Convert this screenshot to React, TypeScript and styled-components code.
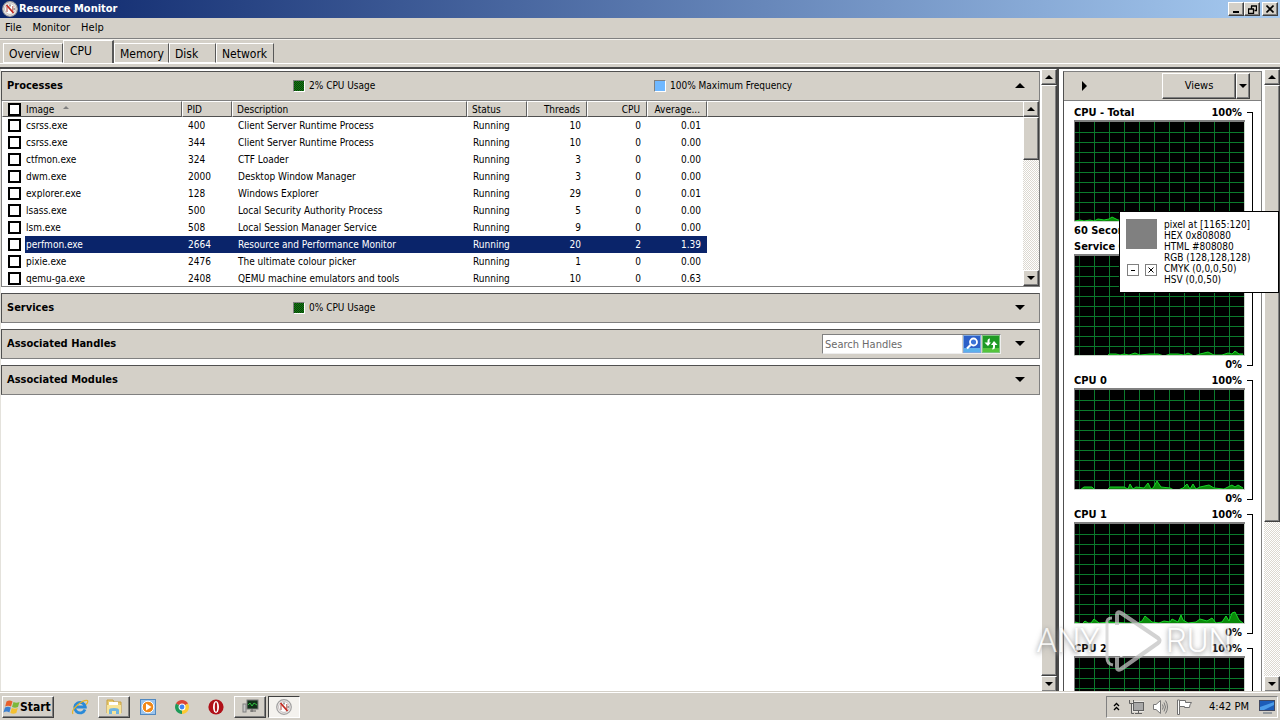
import React from 'react';
import styled, { createGlobalStyle, css } from 'styled-components';

const face = '#d4d0c8';
const dark = '#404040';
const mid = '#808080';

const Global = createGlobalStyle`
  *, *::before, *::after { box-sizing: border-box; }
  body { margin: 0; background: #fff; }
  body, button, input, table {
    font-family: "DejaVu Sans Condensed", "DejaVu Sans", sans-serif;
    font-size: 10px;
    line-height: 14px;
    color: #000;
  }
  button { padding: 0; margin: 0; cursor: default; }
  svg { display: block; flex: none; }
`;

const raised = css`
  background: ${face};
  border: 1px solid;
  border-color: #fff ${dark} ${dark} #fff;
  box-shadow: inset -1px -1px 0 ${mid};
`;

const Page = styled.div`
  display: flex;
  flex-direction: column;
  height: 100vh;
  overflow: hidden;
  position: relative;
  background: ${face};
`;

const TitleBar = styled.header`
  display: flex;
  align-items: center;
  flex: none;
  height: 18px;
  padding: 0 2px;
  gap: 1px;
  background: linear-gradient(90deg, #0a246a, #a6caf0);
`;
const Title = styled.h1`
  flex: 1;
  margin: 0;
  color: #fff;
  font-size: 11px;
  line-height: 18px;
  font-weight: bold;
`;
const WindowButtons = styled.div`
  display: flex;
`;
const WindowButton = styled.button<{ $apart?: boolean }>`
  ${raised}
  width: 16px;
  height: 14px;
  display: grid;
  place-items: center;
  margin-left: ${p => (p.$apart ? 2 : 0)}px;
`;

const MenuBar = styled.nav`
  display: flex;
  flex: none;
  height: 21px;
  padding: 0 5px;
  gap: 11px;
  border-bottom: 1px solid ${mid};
`;
const MenuItem = styled.button`
  border: 0;
  background: none;
  font-size: 11px;
  line-height: 20px;
`;

const TabStrip = styled.div`
  flex: none;
  display: flex;
  align-items: flex-end;
  height: 30px;
  padding: 0 3px 4px;
  border-top: 1px solid #f4f2ee;
  border-bottom: 2px solid #484848;
  background: linear-gradient(#fff, #fff) 0 23px / 100% 1px no-repeat;
`;
const Tab = styled.button<{ $active?: boolean; $w: number }>`
  width: ${p => p.$w}px;
  height: ${p => (p.$active ? '23px' : '20px')};
  padding: ${p => (p.$active ? '0 0 2px 6px' : '1px 0 0 5px')};
  text-align: left;
  font-size: 12px;
  line-height: 16px;
  background: ${face};
  border: solid #fff;
  border-width: ${p => (p.$active ? '1px 0 0 1px' : '1px 0 1px 1px')};
  border-right: ${p => (p.$active ? '2px' : '1px')} solid #585858;
`;

const Body = styled.main`
  flex: 1;
  min-height: 0;
  display: flex;
  background: #fff;
`;
const Sections = styled.div`
  flex: 1;
  min-width: 0;
  display: flex;
  flex-direction: column;
  gap: 6px;
  padding: 2px 1px 0 0;
  border-left: 1px solid #e4e2dc;
`;
const SectionHead = styled.div`
  display: grid;
  grid-template-columns: 286px 361px 1fr auto 38px;
  align-items: center;
  flex: none;
  height: 30px;
  padding-left: 5px;
  background: ${face};
  border: 1px solid ${mid};
  border-top-color: #505050;
  border-left-color: #505050;
`;
const SectionTitle = styled.h2`
  margin: 0;
  font-size: 11px;
  line-height: 16px;
  font-weight: bold;
`;
const Legend = styled.div`
  display: flex;
  align-items: center;
  gap: 4px;
`;
const Swatch = styled.span<{ $blue?: boolean }>`
  width: 12px;
  height: 12px;
  border: 1px solid;
  border-color: ${mid} #fff #fff ${mid};
  background: ${p => (p.$blue ? '#70b8ff' : 'repeating-conic-gradient(#0a3c0a 0 25%, #128012 0 50%) 0 0 / 2px 2px')};
`;
const Toggle = styled.button`
  grid-column: 5;
  border: 0;
  padding-bottom: 2px;
  background: none;
  display: grid;
  place-items: center;
  height: 20px;
`;
const SearchBox = styled.form`
  grid-column: 4;
  display: flex;
  align-items: center;
  gap: 1px;
  border: 1px solid;
  border-color: ${mid} #eee #eee ${mid};
  height: 20px;
`;
const SearchInput = styled.input`
  width: 139px;
  height: 18px;
  border: 0;
  padding: 0 2px;
  background: #fff;
  font-size: 11px;
  outline: 0;
  &::placeholder { color: #6a6a6a; opacity: 1; }
`;
const SearchButton = styled.button`
  border: 0;
  background: none;
  width: 18px;
  height: 18px;
`;

const ListFrame = styled.div`
  display: flex;
  height: 186px;
  overflow: hidden;
  border: 1px solid ${mid};
  border-top: 0;
  background: #fff;
`;
const Table = styled.table`
  flex: 1;
  min-width: 0;
  width: 100%;
  table-layout: fixed;
  border-collapse: separate;
  border-spacing: 0;
  align-self: flex-start;
`;
const Th = styled.th<{ $num?: boolean }>`
  height: 16px;
  padding: 0 6px 0 4px;
  line-height: 13px;
  font-weight: normal;
  text-align: ${p => (p.$num ? 'right' : 'left')};
  white-space: nowrap;
  background: ${face};
  border: 1px solid;
  border-color: #fff #606060 #505050 #fff;
  &:first-child { padding-left: 5px; }
  &:last-child { border-right: 0; }
`;
const Td = styled.td<{ $num?: boolean }>`
  height: 17px;
  padding: 0 6px;
  line-height: 17px;
  text-align: ${p => (p.$num ? 'right' : 'left')};
  white-space: nowrap;
`;
const Row = styled.tr<{ $selected?: boolean }>`
  ${p => p.$selected && css`
    color: #fff;
    td { background: #0a246a; }
    td:first-child { background: linear-gradient(90deg, #fff 23px, #0a246a 23px); }
    td:last-child { background: none; }
  `}
`;
const CheckLine = styled.label`
  display: flex;
  align-items: center;
  gap: 5px;
`;
const Check = styled.input`
  appearance: none;
  margin: 0;
  width: 13px;
  height: 13px;
  flex: none;
  border: 2px solid #000;
  background: #fff;
`;
const SortMark = styled.svg`
  margin: 0 0 3px 4px;
`;

const Scroll = styled.div`
  flex: none;
  width: 16px;
  display: flex;
  flex-direction: column;
  background: repeating-conic-gradient(#fff 0 25%, #dcd8d0 0 50%) 0 0 / 2px 2px;
`;
const ScrollButton = styled.button`
  ${raised}
  flex: none;
  height: 16px;
  display: grid;
  place-items: center;
`;
const Thumb = styled.div<{ $share: string }>`
  ${raised}
  height: ${p => p.$share};
`;
const Track = styled.div`
  flex: 1;
  min-height: 0;
`;
const Splitter = styled.div`
  flex: none;
  width: 6px;
  border-left: 2px solid #484848;
  background: #fff;
`;

const Side = styled.aside`
  flex: none;
  width: 201px;
  padding: 2px 2px 0 0;
`;
const SideInner = styled.div`
  height: 100%;
  overflow: hidden;
  border: 1px solid ${mid};
  border-bottom: 0;
  border-left-color: #505050;
`;
const SideHead = styled.div`
  display: flex;
  align-items: center;
  justify-content: space-between;
  height: 29px;
  padding: 0 11px 0 18px;
  background: ${face};
  border-bottom: 1px solid ${mid};
`;
const IconButton = styled.button`
  border: 0;
  background: none;
`;
const ViewsGroup = styled.div`
  display: flex;
`;
const ViewsButton = styled.button<{ $w: number }>`
  ${raised}
  width: ${p => p.$w}px;
  height: 26px;
  font-size: 11px;
  display: grid;
  place-items: center;
`;
const Graphs = styled.div`
  padding: 3px 0 0 10px;
`;
const GraphBlock = styled.section`
  display: flex;
  gap: 2px;
`;
const GraphMain = styled.div`
  width: 171px;
`;
const GraphLabel = styled.div`
  display: flex;
  justify-content: space-between;
  height: 16px;
  padding-right: 3px;
  font-size: 11px;
  line-height: 18px;
  font-weight: bold;
  white-space: nowrap;
`;
const Bracket = styled.div`
  width: 6px;
  margin: 8px 0 6px;
  border: 1px solid #000;
  border-left: 0;
`;

const Picker = styled.div`
  position: absolute;
  top: 211px;
  right: 1px;
  display: flex;
  gap: 7px;
  width: 160px;
  height: 82px;
  padding: 7px 6px 0;
  background: #fff;
  border: 1px solid #000;
`;
const PickerLeft = styled.div`
  width: 31px;
  display: flex;
  flex-direction: column;
  gap: 15px;
`;
const PickedColour = styled.div`
  height: 30px;
  background: #808080;
`;
const PickerButtons = styled.div`
  display: flex;
  justify-content: space-between;
  padding: 0 0 0 1px;
`;
const PickerButton = styled.button`
  width: 12px;
  height: 12px;
  border: 1px solid ${mid};
  background: #fff;
  display: grid;
  place-items: center;
`;
const PickerText = styled.div`
  line-height: 11px;
  white-space: nowrap;
`;

const Watermark = styled.div`
  position: absolute;
  right: 48px;
  bottom: 47px;
  display: flex;
  align-items: center;
  gap: 4px;
  color: #fff;
  opacity: 0.75;
  font-family: Roboto, sans-serif;
  font-weight: 300;
  font-size: 33px;
  line-height: 64px;
  text-shadow: 0 1px 4px #888, 0 2px 6px #aaa;
  pointer-events: none;
`;

const Taskbar = styled.footer`
  flex: none;
  display: flex;
  align-items: center;
  height: 28px;
  padding: 0 2px;
  border-top: 1px solid #fff;
  box-shadow: 0 -1px 0 ${face};
  position: relative;
`;
const StartButton = styled.button`
  ${raised}
  display: flex;
  align-items: center;
  width: 52px;
  height: 22px;
  margin-right: 10px;
  font-size: 12px;
  font-weight: bold;
`;
const TaskButton = styled.button<{ $kind?: 'open' | 'active' }>`
  width: 32px;
  height: 22px;
  margin-right: 2px;
  display: grid;
  place-items: center;
  border: 0;
  background: none;
  ${p => p.$kind === 'open' && raised}
  ${p => p.$kind === 'active' && css`
    background: #f4f2ee;
    border: 1px solid;
    border-color: ${dark} #fff #fff ${dark};
  `}
`;
const Tray = styled.div`
  margin-left: auto;
  display: flex;
  align-items: center;
  height: 22px;
  width: 172px;
  padding: 0 1px 0 5px;
  border: 1px solid;
  border-color: ${mid} #fff #fff ${mid};
`;
const TrayButton = styled.button<{ $w: number }>`
  border: 0;
  background: none;
  width: ${p => p.$w}px;
  display: grid;
  place-items: center;
`;
const Clock = styled.time`
  font-size: 11px;
  flex: 1;
  text-align: center;
`;

type Dir = 'up' | 'down' | 'right';
function Arrow({ dir, size = 4 }: { dir: Dir; size?: number }) {
  const w = size * 2;
  const d = {
    up: `M0 ${size}L${size} 0L${w} ${size}Z`,
    down: `M0 0L${size} ${size}L${w} 0Z`,
    right: `M0 0L${size} ${size}L0 ${w}Z`,
  }[dir];
  return (
    <svg width={dir === 'right' ? size : w} height={dir === 'right' ? w : size} aria-hidden="true">
      <path d={d} />
    </svg>
  );
}

function MonitorIcon({ size = 16 }: { size?: number }) {
  return (
    <svg width={size} height={size} viewBox="0 0 16 16" aria-hidden="true">
      <circle cx="8" cy="8" r="7.3" fill="#f0ecea" stroke="#a0a0a0" strokeWidth="1.2" />
      <circle cx="8" cy="8" r="5.4" fill="#fff" stroke="#b8b0b0" strokeWidth=".8" />
      <path d="M5 11V5.500M10.800 10.500V5" stroke="#b86860" strokeWidth="1.200" />
      <path d="M4.500 4L11.500 12" stroke="#c22a20" strokeWidth="1.800" />
      <path d="M8 3.500v2M11.500 8h1.500" stroke="#444" strokeWidth="1" />
    </svg>
  );
}

function Scrollbar({ share }: { share: string }) {
  return (
    <Scroll>
      <ScrollButton aria-label="Scroll up"><Arrow dir="up" /></ScrollButton>
      <Track><Thumb $share={share} /></Track>
      <ScrollButton aria-label="Scroll down"><Arrow dir="down" /></ScrollButton>
    </Scroll>
  );
}

const xs = Array.from({ length: 11 }, (_, i) => 5 + i * 15);
const ys = Array.from({ length: 9 }, (_, i) => 12 + i * 10);

function Graph({ wave }: { wave: string }) {
  return (
    <svg width="171" height="102" aria-hidden="true">
      <rect width="171" height="102" fill="#000" />
      <g shapeRendering="crispEdges" fill="#0b7a2c">
        {xs.map((x, i) => <rect key={x} x={x} y="2" width="1" height="100" opacity={i ? 1 : 0.6} />)}
        {ys.map(y => <rect key={y} x="1" y={y} width="169" height="1" />)}
      </g>
      <polygon points={`1,102 ${wave} 170,102`} fill="#0a8a0a" />
      <polyline points={wave} fill="none" stroke="#18d428" />
      <path d="M0 1h171" stroke="#808080" strokeWidth="2" />
      <path d="M.5 0v102" stroke="#808080" />
      <path d="M170.5 2v100M0 101.5h171" stroke="#c8d4c8" />
    </svg>
  );
}

const graphs = [
  { name: 'CPU - Total', foot: '60 Seconds', wave: '1,101 6,100 10,101 16,100 20,101 24,99 30,100 35,99 38,97 44,100 60,101 90,100 120,101 169,101' },
  { name: 'Service CPU Usage', foot: '', wave: '1,102 33,102 35,100 42,100 46,101 50,100 55,101 61,99 66,101 76,100 84,100 90,102 96,100 104,100 110,101 114,99 120,102 126,100 134,98 140,101 148,101 154,99 158,100 161,97 165,100 169,100' },
  { name: 'CPU 0', foot: '', wave: '1,102 6,102 10,99 18,99 21,102 33,102 36,99 50,99 54,101 56,96 59,101 62,99 70,100 74,95 77,101 79,100 83,93 87,99 96,100 100,102 104,102 109,100 113,96 116,101 119,96 122,101 126,99 135,97 140,100 150,101 158,97 161,99 164,97 169,100' },
  { name: 'CPU 1', foot: '', wave: '1,100 8,102 11,99 14,101 17,101 20,97 25,101 35,100 52,101 64,101 68,99 71,94 78,100 85,101 90,99 96,100 98,97 104,100 107,93 109,98 114,101 122,100 126,97 133,99 138,96 142,101 148,100 152,94 155,99 158,91 161,90 165,98 169,101' },
  { name: 'CPU 2', wave: '1,101 169,101' },
];

const columns: { name: string; w?: number; num?: boolean }[] = [
  { name: 'Image', w: 180 },
  { name: 'PID', w: 50 },
  { name: 'Description', w: 235 },
  { name: 'Status', w: 60 },
  { name: 'Threads', w: 60, num: true },
  { name: 'CPU', w: 60, num: true },
  { name: 'Average...', w: 60, num: true },
];

const processes: [string, string, string, string, string, string][] = [
  ['csrss.exe', '400', 'Client Server Runtime Process', '10', '0', '0.01'],
  ['csrss.exe', '344', 'Client Server Runtime Process', '10', '0', '0.00'],
  ['ctfmon.exe', '324', 'CTF Loader', '3', '0', '0.00'],
  ['dwm.exe', '2000', 'Desktop Window Manager', '3', '0', '0.00'],
  ['explorer.exe', '128', 'Windows Explorer', '29', '0', '0.01'],
  ['lsass.exe', '500', 'Local Security Authority Process', '5', '0', '0.00'],
  ['lsm.exe', '508', 'Local Session Manager Service', '9', '0', '0.00'],
  ['perfmon.exe', '2664', 'Resource and Performance Monitor', '20', '2', '1.39'],
  ['pixie.exe', '2476', 'The ultimate colour picker', '1', '0', '0.00'],
  ['qemu-ga.exe', '2408', 'QEMU machine emulators and tools', '10', '0', '0.63'],
];

function ProcessTable() {
  return (
    <ListFrame>
      <Table>
        <colgroup>
          {columns.map(c => <col key={c.name} width={c.w} />)}
          <col />
        </colgroup>
        <thead>
          <tr>
            {columns.map((c, i) => i === 0 ? (
              <Th key={c.name}>
                <CheckLine>
                  <Check type="checkbox" aria-label="Select all" />
                  {c.name}
                  <SortMark width="6" height="3" aria-hidden="true"><path d="M0 3L3 0L6 3Z" fill="#808080" /></SortMark>
                </CheckLine>
              </Th>
            ) : <Th key={c.name} $num={c.num}>{c.name}</Th>)}
            <Th aria-hidden="true" />
          </tr>
        </thead>
        <tbody>
          {processes.map(([image, pid, description, threads, cpu, average]) => (
            <Row key={pid} $selected={pid === '2664'}>
              <Td><CheckLine><Check type="checkbox" />{image}</CheckLine></Td>
              <Td>{pid}</Td>
              <Td>{description}</Td>
              <Td>Running</Td>
              <Td $num>{threads}</Td>
              <Td $num>{cpu}</Td>
              <Td $num>{average}</Td>
              <Td />
            </Row>
          ))}
        </tbody>
      </Table>
      <Scrollbar share="28%" />
    </ListFrame>
  );
}

export default function App() {
  return (
    <Page>
      <Global />
      <TitleBar>
        <MonitorIcon />
        <Title>Resource Monitor</Title>
        <WindowButtons>
          <WindowButton aria-label="Minimize">
            <svg width="8" height="8"><path d="M1 7h6" stroke="#000" strokeWidth="2" /></svg>
          </WindowButton>
          <WindowButton aria-label="Restore">
            <svg width="9" height="9" fill="none" stroke="#000">
              <path d="M3 1h6M8.500 1v4.500H6.500M3.500 1v3" strokeWidth="1.300" />
              <path d="M.5 4v4.500h5V4M0 4h6" strokeWidth="1.300" />
            </svg>
          </WindowButton>
          <WindowButton aria-label="Close" $apart>
            <svg width="8" height="8"><path d="M.5 .5L7.500 7.500M7.500 .5L.5 7.500" stroke="#000" strokeWidth="1.600" /></svg>
          </WindowButton>
        </WindowButtons>
      </TitleBar>
      <MenuBar>
        <MenuItem>File</MenuItem>
        <MenuItem>Monitor</MenuItem>
        <MenuItem>Help</MenuItem>
      </MenuBar>
      <TabStrip role="tablist">
        <Tab role="tab" $w={60}>Overview</Tab>
        <Tab role="tab" $w={51} $active aria-selected="true">CPU</Tab>
        <Tab role="tab" $w={55}>Memory</Tab>
        <Tab role="tab" $w={47}>Disk</Tab>
        <Tab role="tab" $w={58}>Network</Tab>
      </TabStrip>

      <Body>
        <Sections>
          <section>
            <SectionHead>
              <SectionTitle>Processes</SectionTitle>
              <Legend><Swatch />2% CPU Usage</Legend>
              <Legend><Swatch $blue />100% Maximum Frequency</Legend>
              <Toggle aria-label="Collapse Processes"><Arrow dir="up" size={5} /></Toggle>
            </SectionHead>
            <ProcessTable />
          </section>
          <SectionHead>
            <SectionTitle>Services</SectionTitle>
            <Legend><Swatch />0% CPU Usage</Legend>
            <Toggle aria-label="Expand Services"><Arrow dir="down" size={5} /></Toggle>
          </SectionHead>
          <SectionHead>
            <SectionTitle>Associated Handles</SectionTitle>
            <SearchBox>
              <SearchInput placeholder="Search Handles" aria-label="Search Handles" />
              <SearchButton type="button" aria-label="Search">
                <svg width="18" height="18">
                  <rect x=".5" y=".5" width="17" height="17" fill="#2c60c8" stroke="#7ea8e0" />
                  <path d="M1 13h16v4H1z" fill="#5cb0ec" />
                  <circle cx="10.500" cy="7" r="3.500" fill="#3c74d8" stroke="#fff" strokeWidth="1.800" />
                  <path d="M7.500 10L4 13.500" stroke="#fff" strokeWidth="2.200" />
                </svg>
              </SearchButton>
              <SearchButton type="button" aria-label="Refresh">
                <svg width="18" height="18">
                  <rect x=".5" y=".5" width="17" height="17" fill="#1f9a24" stroke="#7cc47c" />
                  <path d="M1 13h16v4H1z" fill="#54c43c" />
                  <path d="M8 3.500Q5.500 3.500 5.500 6v1.500H2.500L6 11L9 7.500H7.500V6Z" fill="#fff" />
                  <path d="M10 14.500q3 0 3-2.500v-2h2.500L12 6L9 10h2v2Z" fill="#fff" />
                </svg>
              </SearchButton>
            </SearchBox>
            <Toggle aria-label="Expand Associated Handles"><Arrow dir="down" size={5} /></Toggle>
          </SectionHead>
          <SectionHead>
            <SectionTitle>Associated Modules</SectionTitle>
            <Toggle aria-label="Expand Associated Modules"><Arrow dir="down" size={5} /></Toggle>
          </SectionHead>
        </Sections>
        <Scrollbar share="100%" />
        <Splitter />
        <Side>
          <SideInner>
            <SideHead>
              <IconButton aria-label="Hide graphs"><Arrow dir="right" size={5} /></IconButton>
              <ViewsGroup>
                <ViewsButton $w={74}>Views</ViewsButton>
                <ViewsButton $w={14} aria-label="View options"><Arrow dir="down" /></ViewsButton>
              </ViewsGroup>
            </SideHead>
            <Graphs>
              {graphs.map(g => (
                <GraphBlock key={g.name}>
                  <GraphMain>
                    <GraphLabel><span>{g.name}</span><span>100%</span></GraphLabel>
                    <Graph wave={g.wave} />
                    {g.foot !== undefined && <GraphLabel><span>{g.foot}</span><span>0%</span></GraphLabel>}
                  </GraphMain>
                  <Bracket />
                </GraphBlock>
              ))}
            </Graphs>
          </SideInner>
        </Side>
        <Scrollbar share="74%" />
      </Body>

      <Taskbar>
        <StartButton>
          <svg width="17" height="16" viewBox="0 0 17 16" aria-hidden="true">
            <path d="M3.500 2.500q3-2 6 0L8 7.500q-3-1.600-5.800 0Z" fill="#e8602c" />
            <path d="M10.500 3q2.800 1.600 6 0L15 8q-3 1.600-6 0Z" fill="#7cb83c" />
            <path d="M2 8.500q3-1.600 5.800 0L6.400 13.500q-2.800-2-6 0Z" fill="#3c80d0" />
            <path d="M8.800 9q3 1.600 6 0l-1.500 5q-3 1.600-6 0Z" fill="#f4c030" />
          </svg>
          Start
        </StartButton>
        <TaskButton aria-label="Internet Explorer">
          <svg width="18" height="18" viewBox="0 0 18 18" fill="none">
            <path d="M14 11.500A5.300 5.300 0 1 1 14.300 9H5" stroke="#2a8ad8" strokeWidth="2.800" />
            <path d="M2 16q-2-3 4-8.500T16.500 2.500Q17.500 4 15 6.500" stroke="#e8b428" strokeWidth="1.200" />
          </svg>
        </TaskButton>
        <TaskButton $kind="open" aria-label="Windows Explorer">
          <svg width="18" height="17" viewBox="0 0 18 17">
            <path d="M2 2h6l1 2h7v11H2Z" fill="#e8cc70" stroke="#c8a040" />
            <path d="M4 4h9v4H4Z" fill="#fff" />
            <path d="M2 7h14v9H2Z" fill="#f8e498" />
            <path d="M4 16v-4q0-2 5-2t5 2v4h-3v-3H7v3Z" fill="#70b4e0" />
          </svg>
        </TaskButton>
        <TaskButton aria-label="Windows Media Player">
          <svg width="16" height="16" viewBox="0 0 16 16">
            <rect x=".5" y=".5" width="15" height="15" fill="#9cc4ec" stroke="#5088c0" />
            <circle cx="8" cy="8" r="5.800" fill="#f08818" stroke="#fff" />
            <path d="M6 4.500L11.500 8L6 11.500Z" fill="#fff" />
          </svg>
        </TaskButton>
        <TaskButton aria-label="Chrome">
          <svg width="14" height="14" viewBox="0 0 16 16">
            <path d="M8 8L1.100 4A8 8 0 0 1 14.900 4Z" fill="#dc4437" />
            <path d="M8 8L14.900 4A8 8 0 0 1 8 16Z" fill="#fcc934" />
            <path d="M8 8L8 16A8 8 0 0 1 1.100 4Z" fill="#1e9a58" />
            <circle cx="8" cy="8" r="3.400" fill="#4285f4" stroke="#fff" strokeWidth="1.200" />
          </svg>
        </TaskButton>
        <TaskButton aria-label="Opera">
          <svg width="16" height="16" viewBox="0 0 16 16">
            <circle cx="8" cy="8" r="7.600" fill="#b01018" />
            <ellipse cx="8" cy="8" rx="3" ry="6" fill="#fff" />
            <ellipse cx="8" cy="8" rx="1.200" ry="4.800" fill="#b01018" />
          </svg>
        </TaskButton>
        <TaskButton $kind="open" aria-label="Task Manager">
          <svg width="17" height="15" viewBox="0 0 17 15">
            <rect x="1" y="5" width="3" height="8" fill="#c8c8c8" stroke="#808080" />
            <rect x="5" y="1" width="11" height="9" fill="#103018" stroke="#787878" />
            <path d="M6 6l2-2 2 3 2-3 3 2" stroke="#30c040" fill="none" />
            <path d="M8 12h6M10 10v3" stroke="#606060" />
          </svg>
        </TaskButton>
        <TaskButton $kind="active" aria-label="Resource Monitor"><MonitorIcon /></TaskButton>

        <Tray>
          <TrayButton $w={8} aria-label="Show hidden icons">
            <svg width="7" height="9" fill="none" stroke="#000" strokeWidth="1.300"><path d="M1 4L3.500 1.500L6 4M1 8L3.500 5.500L6 8" /></svg>
          </TrayButton>
          <TrayButton $w={32} aria-label="Network">
            <svg width="16" height="16" viewBox="0 0 16 16" fill="none" stroke="#606060">
              <rect x="5.500" y="3.500" width="10" height="8" fill="#b8b8b8" stroke="#fff" strokeWidth="2" />
              <rect x="5.500" y="3.500" width="10" height="8" fill="#a8a8a8" />
              <path d="M7 14.500h7M10.500 12v2M1.500 1v3.500h4V1M3.500 5v9.500H6" />
            </svg>
          </TrayButton>
          <TrayButton $w={16} aria-label="Volume">
            <svg width="16" height="16" viewBox="0 0 16 16" fill="none" stroke="#787878">
              <path d="M1.500 5.500H4L8.500 1.500v13L4 10.500H1.500Z" fill="#fff" />
              <path d="M10.500 5.500q1.500 2.500 0 5M12 3.500q3 4.500 0 9M13.500 1.500q4 6.500 0 13" />
            </svg>
          </TrayButton>
          <TrayButton $w={32} aria-label="Action Center">
            <svg width="17" height="16" viewBox="0 0 17 16" fill="#fff" stroke="#707070">
              <path d="M1.500 1v14.500h2V1Z" />
              <path d="M3.500 1.500h6v2h6q-2 2-2 5h-5v-1h-5Z" />
            </svg>
          </TrayButton>
          <Clock>4:42 PM</Clock>
          <TrayButton $w={18} aria-label="Desktop">
            <svg width="16" height="14" viewBox="0 0 16 14">
              <rect x=".5" y=".5" width="15" height="10" fill="#1c5cb8" stroke="#404860" />
              <path d="M1 7L15 2v3L5 10H1Z" fill="#4c9ce8" />
              <path d="M4 13h9" stroke="#808890" strokeWidth="1.500" />
            </svg>
          </TrayButton>
        </Tray>
      </Taskbar>

      <Watermark>
        ANY
        <svg width="58" height="62" viewBox="0 0 58 62" fill="none" strokeLinejoin="round">
          <path d="M13 15V5q0-4 4-2L54 28q3 3 0 5L17 59q-4 2-4-2V47" stroke="#c4c4c4" strokeWidth="4" />
          <path d="M8 8Q2 8 3 14V48Q3 54 9 55" stroke="#d0d0d0" strokeWidth="3" />
          <path d="M17 17L46 31L17 46Z" fill="#fff" stroke="#fff" strokeWidth="2" />
        </svg>
        RUN
      </Watermark>

      <Picker>
        <PickerLeft>
          <PickedColour />
          <PickerButtons>
            <PickerButton aria-label="Minimize picker"><svg width="4" height="1"><path d="M0 .5h4" stroke="#000" /></svg></PickerButton>
            <PickerButton aria-label="Close picker"><svg width="6" height="6"><path d="M.5 .5l5 5M5.500 .5l-5 5" stroke="#000" /></svg></PickerButton>
          </PickerButtons>
        </PickerLeft>
        <PickerText>
          pixel at [1165:120]<br />HEX 0x808080<br />HTML #808080<br />RGB (128,128,128)<br />CMYK (0,0,0,50)<br />HSV (0,0,50)
        </PickerText>
      </Picker>
    </Page>
  );
}
